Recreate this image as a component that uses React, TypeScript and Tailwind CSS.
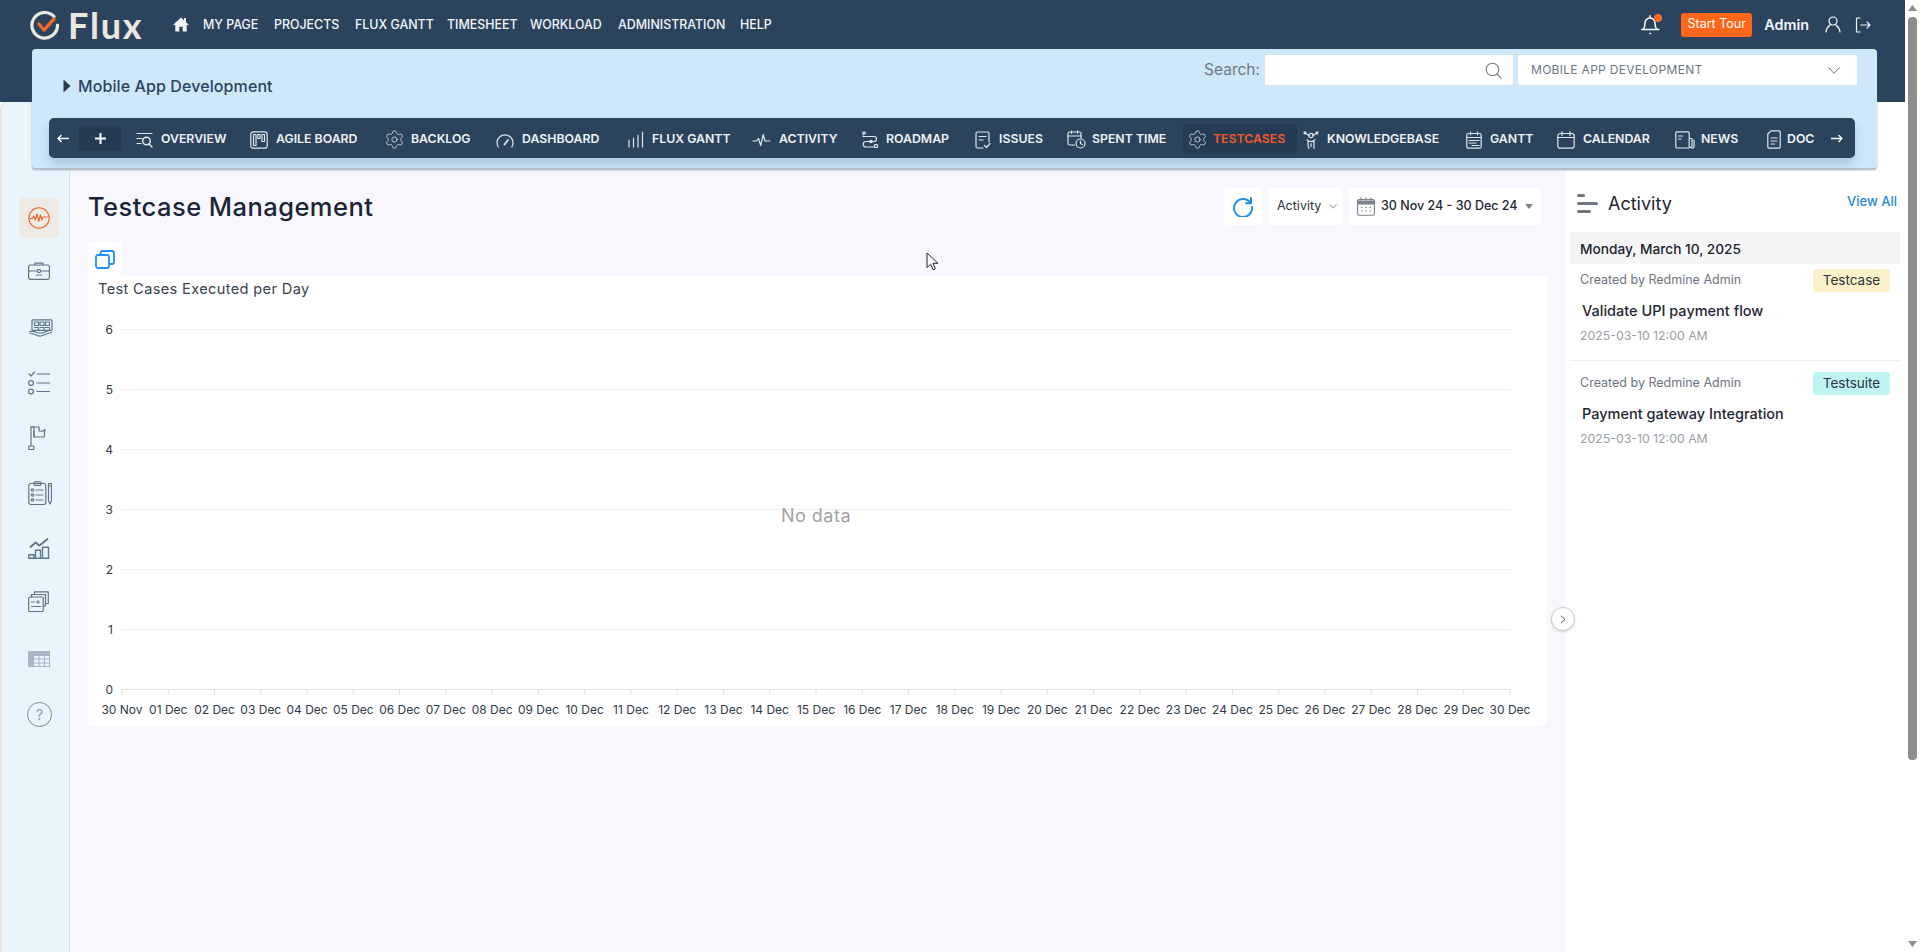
import React from "react";
import { Settings } from "lucide-react";

const S = { fill: "none", stroke: "currentColor", strokeWidth: 1.2, strokeLinecap: "round" as const, strokeLinejoin: "round" as const };

const Ic = {
  overview: (
    <svg width="17" height="17" viewBox="0 0 17 17" {...S}>
      <path d="M1 2.5h15M1 7.5h5M1 12.5h4" />
      <circle cx="10.5" cy="10" r="3.8" strokeWidth="1.5" />
      <path d="M13.2 13l2.8 3" strokeWidth="1.5" />
    </svg>
  ),
  agile: (
    <svg width="18" height="18" viewBox="0 0 18 18" {...S}>
      <rect x="0.8" y="0.8" width="16.4" height="16.4" rx="2.5" />
      <rect x="3.5" y="3.5" width="2.5" height="11" />
      <rect x="7.8" y="3.5" width="2.2" height="4" />
      <rect x="12" y="3.5" width="2.5" height="7" />
    </svg>
  ),
  gear: <Settings size={21} strokeWidth={0.9} className="-mr-[2px] -ml-[1px]" />,
  gearActive: <Settings size={21} strokeWidth={0.9} className="-mr-[3px] -ml-[1px]" />,
  dash: (
    <svg width="18" height="16" viewBox="0 0 18 16" {...S}>
      <path d="M2.2 15A8 8 0 1 1 15.8 15" />
      <path d="M8.5 12.5L12 8" strokeWidth="1.8" />
    </svg>
  ),
  bars: (
    <svg width="16" height="17" viewBox="0 0 16 17" {...S}>
      <path d="M1 16v-7M5.5 16V7M10 16V4M14.5 16V1" />
    </svg>
  ),
  pulse: (
    <svg width="19" height="12" viewBox="0 0 18 12" {...S}>
      <path d="M0.5 7h3.5l2-2.5 2.2 7 2.5-11 1.8 6.5h5" />
    </svg>
  ),
  road: (
    <svg width="17" height="17" viewBox="0 0 17 17" {...S} className="-mr-[1px]">
      <path d="M1 1v3M1 1h2v2H1" />
      <path d="M1 5.5h11a2.5 2.5 0 0 1 0 5H4a2.7 2.7 0 0 0 0 5.5h8" />
      <circle cx="14" cy="15" r="1.7" />
      <circle cx="9" cy="10.5" r="1.2" />
    </svg>
  ),
  issues: (
    <svg width="16" height="18" viewBox="0 0 16 18" {...S}>
      <path d="M8 17H2.5A1.5 1.5 0 0 1 1 15.5v-13A1.5 1.5 0 0 1 2.5 1h10A1.5 1.5 0 0 1 14 2.5V11" />
      <path d="M4 5.5h7M4 9h4M9.5 14.5l2 2 3.5-4" />
    </svg>
  ),
  spent: (
    <svg width="19" height="19" viewBox="0 0 19 19" {...S} className="-mr-[2px]">
      <path d="M7.5 15H2.5A1.5 1.5 0 0 1 1 13.5v-10A1.5 1.5 0 0 1 2.5 2h10A1.5 1.5 0 0 1 14 3.5V8" />
      <path d="M1 6h13M4.5 0.8v2.5M10.5 0.8v2.5" />
      <circle cx="13.5" cy="13.5" r="4.5" />
      <path d="M13.5 11v2.5l1.8 1" />
    </svg>
  ),
  know: (
    <svg width="16" height="18" viewBox="0 0 15 18" {...S}>
      <circle cx="7.5" cy="4.5" r="2.2" />
      <circle cx="1.5" cy="1.8" r="1" />
      <circle cx="13.5" cy="1.8" r="1" />
      <path d="M2.2 2.6l3.4 2M12.8 2.6l-3.4 2M3.5 8.5c1 1.5 2.5 2 4 2s3-.5 4-2M4.5 10v4c0 2 1 3.5 1 3.5M10.5 10v7.5M7.5 12.5v3" />
    </svg>
  ),
  gantt: (
    <svg width="16" height="18" viewBox="0 0 16 18" {...S}>
      <rect x="0.8" y="2.5" width="14.4" height="14.7" rx="1.5" />
      <path d="M4.5 0.8v3M11.5 0.8v3M0.8 6.5h14.4M3 9.5h10M3 12h7M6 14.5h7" />
    </svg>
  ),
  cal: (
    <svg width="18" height="18" viewBox="0 0 18 18" {...S}>
      <rect x="0.8" y="2.5" width="16.4" height="14.7" rx="2.5" />
      <path d="M5 0.6v4M13 0.6v4M0.8 6.5h16.4" />
    </svg>
  ),
  news: (
    <svg width="20" height="18" viewBox="0 0 20 18" {...S} className="-mr-[2px]">
      <path d="M14 17H2A1.2 1.2 0 0 1 0.8 15.8V2A1.2 1.2 0 0 1 2 0.8h11A1.2 1.2 0 0 1 14.2 2v13.5A1.5 1.5 0 0 0 17 15.5V7.5h-2.8" />
      <path d="M3.5 5h4M3.5 8h2.5" />
      <path d="M19 9v6.5a1.5 1.5 0 0 1-2 1.5" />
    </svg>
  ),
  doc: (
    <svg width="14" height="19" viewBox="0 0 14 19" {...S} className="-mr-[2px]">
      <path d="M4 0.8h7.7A1.5 1.5 0 0 1 13.2 2.3v14.4a1.5 1.5 0 0 1-1.5 1.5H2.3a1.5 1.5 0 0 1-1.5-1.5V4z" />
      <path d="M4 8h6M4 11h6M4 14h3.5" />
    </svg>
  ),
};

const S2 = { fill: "none", stroke: "#60748a", strokeWidth: 1.2, strokeLinecap: "round" as const, strokeLinejoin: "round" as const };

function SideIcons() {
  return (
    <div className="flex flex-col pt-[88px] pl-[6px]">
      <div className="h-[55px] flex items-center justify-center">
        <div className="w-10 h-10 rounded-[4px] bg-[#efe9e4] flex items-center justify-center">
          <svg width="22" height="22" viewBox="0 0 22 22" fill="none" stroke="#e8672a" strokeWidth="1.1" strokeLinejoin="round">
            <circle cx="11" cy="11" r="10.2" />
            <path d="M1.5 11.5h3l1.3-2.5 1.5 4 1.7-6 1.8 7.5 1.6-6.5 1.5 5 1.3-3h4.5" />
          </svg>
        </div>
      </div>
      <div className="h-[55px] flex items-center justify-center -translate-y-[2px]">
        <svg width="22" height="18" viewBox="0 0 22 18" {...S2}>
          <rect x="0.6" y="3" width="20.8" height="14.4" rx="1.8" />
          <path d="M7 3V1.2h8V3M0.6 9h8M13.4 9h8" />
          <circle cx="11" cy="9" r="1.6" />
          <path d="M8.5 13h5" />
        </svg>
      </div>
      <div className="h-[55px] flex items-center justify-center translate-x-[2px]">
        <svg width="24" height="18" viewBox="0 0 24 18" {...S2}>
          <rect x="3" y="0.8" width="20" height="10.5" rx="1" />
          <rect x="5.5" y="3" width="4" height="3.5" />
          <rect x="11" y="3" width="4" height="3.5" />
          <rect x="16.5" y="3" width="4" height="3.5" />
          <path d="M5.5 8.5h4v3M11 8.5h4v3M16.5 8.5h4v3M0.8 12.5c4-1.5 6 1.5 9 1.5h3.5l6-2.2M0.8 14c4 0 7 3.2 10.5 3.2L23 13" />
        </svg>
      </div>
      <div className="h-[55px] flex items-center justify-center">
        <svg width="22" height="24" viewBox="0 0 22 24" {...S2}>
          <path d="M1 3l2 2 3.5-4M9 3h13M9 12h13M9 20.5h13" />
          <circle cx="3" cy="12" r="2.4" />
          <circle cx="3" cy="20.5" r="2.4" />
        </svg>
      </div>
      <div className="h-[55px] flex items-center justify-center -translate-x-[2px]">
        <svg width="18" height="24" viewBox="0 0 18 24" {...S2}>
          <path d="M3 20V1h8v4c2 .5 4.5 0 6-1.5-.5 2-1 3.5-.5 5.5.2 1-.2 2-1 2H6V5" />
          <path d="M3 1h3v10" />
          <rect x="0.8" y="20" width="5" height="3.5" />
        </svg>
      </div>
      <div className="h-[55px] flex items-center justify-center translate-x-[1px]">
        <svg width="24" height="24" viewBox="0 0 24 24" {...S2}>
          <rect x="0.8" y="2.5" width="17" height="21" rx="2" />
          <rect x="6" y="0.8" width="7" height="3.5" rx="1" />
          <circle cx="4.5" cy="9" r="1.2" />
          <circle cx="4.5" cy="14" r="1.2" />
          <circle cx="4.5" cy="19" r="1.2" />
          <path d="M8 9h7M8 14h7M8 19h7" />
          <path d="M20.5 2.5h3v17.5l-1.5 3-1.5-3zM20.5 5h3" />
        </svg>
      </div>
      <div className="h-[55px] flex items-center justify-center">
        <svg width="22" height="22" viewBox="0 0 22 22" fill="none" stroke="#60748a" strokeWidth="1.4" strokeLinejoin="round" strokeLinecap="round">
          <path d="M2.5 10l5-4.5 4 3L19.5 2" strokeWidth="1.8" />
          <path d="M0.8 21.2v-3.5h5v3.5zM7.5 21.2v-8h5v8zM14.5 21.2v-11h6v11zM0.8 21.2h20" />
        </svg>
      </div>
      <div className="h-[55px] flex items-center justify-center -translate-y-[1px]">
        <svg width="21" height="21" viewBox="0 0 21 21" {...S2}>
          <rect x="0.7" y="6" width="14.5" height="14.5" rx="1.2" />
          <path d="M3.5 6V3.5h14V15h-2.3M6.5 3.5V0.8h13.8V12.5h-3" />
          <path d="M3.5 11h3M10 9.5v3M8.5 11h3M3.5 15.5h9" />
        </svg>
      </div>
      <div className="h-[55px] flex items-center justify-center translate-y-[1px]">
        <svg width="22" height="16" viewBox="0 0 22 16" fill="none" stroke="#a9b6c6" strokeWidth="1">
          <rect x="0.5" y="0.5" width="21" height="15" />
          <rect x="0.5" y="0.5" width="21" height="4" fill="#a9b6c6" />
          <rect x="0.5" y="0.5" width="5" height="15" fill="#a9b6c6" />
          <path d="M5.5 8h16M5.5 12h16M11 0.5v15M16.5 0.5v15" />
        </svg>
      </div>
      <div className="h-[55px] flex items-center justify-center translate-x-[1px] translate-y-[2px]">
        <div className="w-[25px] h-[25px] rounded-full border border-[#7b8a9b] flex items-center justify-center text-[14px] font-[Inter,sans-serif] text-[#8a97a6]">?</div>
      </div>
    </div>
  );
}

const tabs = [
  { w: "w-[114px]", icon: Ic.overview, label: "OVERVIEW" },
  { w: "w-[135px]", icon: Ic.agile, label: "AGILE BOARD" },
  { w: "w-[111px]", icon: Ic.gear, label: "BACKLOG" },
  { w: "w-[132px]", icon: Ic.dash, label: "DASHBOARD" },
  { w: "w-[124px]", icon: Ic.bars, label: "FLUX GANTT" },
  { w: "w-[110px]", icon: Ic.pulse, label: "ACTIVITY" },
  { w: "w-[113px]", icon: Ic.road, label: "ROADMAP" },
  { w: "w-[92px]", icon: Ic.issues, label: "ISSUES" },
  { w: "w-[121px]", icon: Ic.spent, label: "SPENT TIME" },
  { w: "w-[115px]", icon: Ic.gearActive, label: "TESTCASES", active: true },
  { w: "w-[163px]", icon: Ic.know, label: "KNOWLEDGEBASE" },
  { w: "w-[91px]", icon: Ic.gantt, label: "GANTT" },
  { w: "w-[118px]", icon: Ic.cal, label: "CALENDAR" },
  { w: "w-[92px]", icon: Ic.news, label: "NEWS" },
  { w: "w-[48px]", icon: Ic.doc, label: "DOC" },
];

const topNav = [
  { w: "w-[71px]", label: "MY PAGE" },
  { w: "w-[81px]", label: "PROJECTS" },
  { w: "w-[92px]", label: "FLUX GANTT" },
  { w: "w-[83px]", label: "TIMESHEET" },
  { w: "w-[88px]", label: "WORKLOAD" },
  { w: "w-[122px]", label: "ADMINISTRATION" },
  { w: "w-[40px]", label: "HELP" },
];

const days = ["30 Nov", ...Array.from({ length: 30 }, (_, i) => `${String(i + 1).padStart(2, "0")} Dec`)];

function Chart() {
  const left = 34;
  const right = 1422;
  const step = (right - left) / 30;
  return (
    <svg width="1459" height="426" viewBox="0 0 1459 426" className="block font-[Inter,sans-serif]">
      {[6, 5, 4, 3, 2, 1].map((v, i) => (
        <line key={v} x1={left} x2={right} y1={29.5 + i * 60} y2={29.5 + i * 60} stroke="#eef0f2" strokeWidth="1" />
      ))}
      <line x1={left} x2={right} y1={389.5} y2={389.5} stroke="#e0e3e6" strokeWidth="1" />
      {days.map((d, i) => (
        <g key={i}>
          <line x1={left + i * step} x2={left + i * step} y1={389} y2={395} stroke="#e0e3e6" />
          <text x={left + i * step} y={414} textAnchor="middle" fontSize="12" fill="#2f3a4a">{d}</text>
        </g>
      ))}
      {[6, 5, 4, 3, 2, 1, 0].map((v, i) => (
        <text key={v} x="25" y={33.5 + i * 60} textAnchor="end" fontSize="12" fill="#2f3a4a">{v}</text>
      ))}
      <text x="728" y="222" textAnchor="middle" fontSize="18" letterSpacing="0.5" fill="#a3a3a3">No data</text>
    </svg>
  );
}

function ActivityItem({ badge, badgeClass, title, className }: { badge: string; badgeClass: string; title: string; className: string }) {
  return (
    <div className={`ml-[5px] mr-[5px] pl-[10px] ${className}`}>
      <div className="flex items-center justify-between pr-[10px]">
        <span className="text-[12.5px] text-[#6c7480]">Created by Redmine Admin</span>
        <span className={`w-[77px] h-[23px] rounded-[3px] flex items-center justify-center text-[13.5px] text-[#2b3440] ${badgeClass}`}>{badge}</span>
      </div>
      <div className="mt-[9px] ml-[2px] h-5 leading-5 text-[14.5px] font-medium text-[#1f2733] whitespace-nowrap">{title}</div>
      <div className="mt-[7px] h-4 leading-4 text-[12.3px] text-[#98a0a8]">2025-03-10 12:00 AM</div>
    </div>
  );
}

export default function App() {
  return (
    <div className="flex h-[952px] w-full overflow-hidden bg-white font-[Inter,sans-serif]">
      <div className="flex-1 flex flex-col min-w-0">
        {/* Header */}
        <header className="h-[102px] bg-[#2c435e] relative z-10 shrink-0">
          <div className="h-[49px] flex items-center text-white">
            <div className="ml-[30px] w-[143px] flex items-center">
              <svg width="30" height="30" viewBox="0 0 30 30" fill="none">
                <path d="M24 6.5A12.8 12.8 0 1 0 27.5 15" stroke="#ece9e2" strokeWidth="3.2" strokeLinecap="round" />
                <path d="M9 14l5 6 10-11" stroke="#ee6a2b" strokeWidth="3.4" strokeLinecap="round" strokeLinejoin="round" />
              </svg>
              <span className="ml-[8px] text-[36px] leading-none font-bold text-[#ebe7df] tracking-[1.8px] font-[Lato,sans-serif]">Flux</span>
            </div>
            <svg width="16" height="15" viewBox="0 0 16 15" fill="#f2f4f6" className="mr-[14px]">
              <path d="M8 0.5L0 8h2.3v6.5H6.3V9.8h3.4v4.7h4V8H16L13 5.2V1h-2v2.3z" />
            </svg>
            {topNav.map((n) => (
              <span key={n.label} className={`${n.w} shrink-0 pt-[1px] text-[12.4px] font-medium whitespace-nowrap text-[#f3f5f7]`}>{n.label}</span>
            ))}
            <div className="ml-auto flex items-center">
              <div className="relative w-[21px] h-[21px] mr-[19px]">
                <svg width="19" height="21" viewBox="0 0 19 21" fill="none" stroke="#ffffff" strokeWidth="1.5" strokeLinecap="round" strokeLinejoin="round">
                  <path d="M2 15.5c1.5-1.5 2-3 2-6.5a5 5 0 0 1 5-5 5 5 0 0 1 5 5c0 3.5.5 5 2 6.5zM0.8 15.5h17M9 1.8v2M9 19.5h.5" />
                </svg>
                <span className="absolute right-0 top-0 w-[8px] h-[8px] rounded-full bg-[#ff6a1f]" />
              </div>
              <span className="w-[71px] h-6 rounded-[3px] bg-[#ff661a] text-[12.5px] text-white flex items-center justify-center">Start Tour</span>
              <span className="ml-[12px] text-[14.4px] font-semibold text-[#f3f5f7]">Admin</span>
              <svg width="16" height="17" viewBox="0 0 16 17" fill="none" stroke="#f3f5f7" strokeWidth="1.2" strokeLinecap="round" className="ml-[16px]">
                <circle cx="8" cy="5" r="4" />
                <path d="M1 16c0-4 3-6 4.5-7.5M15 16c0-4-3-6-4.5-7.5" />
              </svg>
              <svg width="16" height="16" viewBox="0 0 16 16" fill="none" stroke="#f3f5f7" strokeWidth="1.2" strokeLinecap="round" strokeLinejoin="round" className="ml-[14px] mr-[34px]">
                <path d="M5 1H1.5v14H5M6 8h9M12 4.8L15 8l-3 3.2" />
              </svg>
            </div>
          </div>
          {/* Project card */}
          <div className="ml-[32px] w-[1845px] h-[121px] rounded-[4px] bg-[#cfe7fb] border-b-2 border-[#b9c2cb] shadow-[0_0_2px_rgba(80,100,120,0.5)] pl-[17px] pr-[20px] flex flex-col">
            <div className="h-[69px] flex justify-between">
              <div className="ml-[14px] mt-[27px] h-5 flex items-center text-[#2c435e]">
                <svg width="8" height="14" viewBox="0 0 8 14" fill="#2c3a4c"><path d="M0.5 0.5L7.5 7L0.5 13.5z" /></svg>
                <span className="ml-[7px] text-[16px] font-medium tracking-[0.1px] whitespace-nowrap">Mobile App Development</span>
              </div>
              <div className="mt-[6px] h-[30px] flex items-center">
                <span className="text-[15.5px] text-[#6d7885] mr-[5px]">Search:</span>
                <div className="w-[248px] h-[30px] rounded-[2px] bg-white flex items-center justify-end pr-[11px]">
                  <svg width="17" height="17" viewBox="0 0 17 17" fill="none" stroke="#727d89" strokeWidth="1.1" strokeLinecap="round">
                    <circle cx="7.5" cy="7.5" r="6.3" />
                    <path d="M12 12l4 4.2" />
                  </svg>
                </div>
                <div className="ml-[5px] w-[339px] h-[30px] rounded-[2px] bg-white flex items-center justify-between pl-[13px] pr-[17px]">
                  <span className="text-[12px] text-[#6c7682] tracking-[0.3px]">MOBILE APP DEVELOPMENT</span>
                  <svg width="12" height="7" viewBox="0 0 12 7" fill="none" stroke="#6c7682" strokeWidth="1"><path d="M0.5 0.5L6 6.3l5.5-5.8" /></svg>
                </div>
              </div>
            </div>
            <div className="h-10 mr-[2px] rounded-[5px] bg-[#2c435e] shadow-[0_6px_10px_rgba(60,100,140,0.25)] flex items-center text-[#eef2f5]">
              <svg width="12" height="9" viewBox="0 0 12 9" fill="none" stroke="#ffffff" strokeWidth="1.3" className="ml-[8px] shrink-0"><path d="M12 4.5H1M4.5 1L1 4.5 4.5 8" /></svg>
              <div className="ml-[10px] w-[42px] h-[25px] rounded-[3px] bg-[#263b53] shrink-0 flex items-center justify-center">
                <svg width="11" height="11" viewBox="0 0 11 11" stroke="#ffffff" strokeWidth="2"><path d="M5.5 0v11M0 5.5h11" /></svg>
              </div>
              <div className="ml-[15px] w-[1679px] shrink-0 overflow-hidden flex items-center pt-[7px] pb-[4px]">
                {tabs.map((t) => (
                  <div key={t.label} className={`${t.w} shrink-0 relative flex items-center gap-[8px] whitespace-nowrap text-[12.3px] font-semibold`}>
                    {t.active && <span className="absolute -left-[5px] right-[6px] -top-[5px] -bottom-[3px] rounded-[3px] bg-[#263b53]" />}
                    <span className="relative text-[#dfe6ec]">{t.icon}</span>
                    <span className={t.active ? "relative text-[#f0582a]" : "relative"}>{t.label}</span>
                  </div>
                ))}
              </div>
              <svg width="12" height="9" viewBox="0 0 12 9" fill="none" stroke="#ffffff" strokeWidth="1.3" className="ml-[16px] shrink-0"><path d="M0 4.5h11M7.5 1L11 4.5 7.5 8" /></svg>
            </div>
          </div>
        </header>

        {/* Body */}
        <div className="flex-1 flex min-h-0">
          <aside className="w-[70px] shrink-0 bg-[#e9f5fd] border-r border-[#cfe2f1] border-l-2 border-l-[#e6e3e1] rounded-tl-[6px]">
            <SideIcons />
          </aside>
          <main className="relative flex-1 min-w-0 bg-[#f7f7fd] pt-[86px] pl-[18px] pr-[18px]">
            <div className="h-[37px] flex items-center justify-between">
              <h1 className="pt-[2px] text-[25.5px] font-medium tracking-[0.45px] text-[#1c2536] font-[Inter,sans-serif]">Testcase Management</h1>
              <div className="flex items-center h-[37px] mr-[6px]">
                <div className="w-[38px] h-[37px] rounded-[4px] bg-white flex items-center justify-center">
                  <svg width="20" height="20" viewBox="0 0 20 20" fill="none" stroke="#1e90e8" strokeWidth="2" strokeLinecap="round" strokeLinejoin="round">
                    <path d="M17.5 6A9 9 0 1 0 19 10" />
                    <path d="M18 1v5.2h-5" />
                  </svg>
                </div>
                <div className="ml-[7px] w-[73px] h-[37px] rounded-[4px] bg-white flex items-center pl-[8px] text-[12.5px] text-[#2a3340]">
                  Activity
                  <svg width="8" height="5" viewBox="0 0 8 5" fill="none" stroke="#a6adb5" strokeWidth="1.2" className="ml-[8px]"><path d="M0.5 0.5L4 4l3.5-3.5" /></svg>
                </div>
                <div className="ml-[7px] w-[192px] h-[37px] rounded-[4px] bg-white flex items-center pl-[8px] text-[12.5px] font-medium text-[#1f2733]">
                  <svg width="18" height="19" viewBox="0 0 18 19" fill="none" stroke="#7b838d" strokeWidth="1.1">
                    <rect x="0.6" y="2.5" width="16.8" height="15.8" rx="1.5" />
                    <path d="M0.6 4h16.8v3H0.6z" fill="#7b838d" />
                    <path d="M4 0.6v3M9 0.6v3M14 0.6v3M4 10.5h1.5M8.2 10.5h1.5M12.5 10.5H14M4 14h1.5M8.2 14h1.5M12.5 14H14" />
                  </svg>
                  <span className="ml-[6px] whitespace-nowrap">30 Nov 24 - 30 Dec 24</span>
                  <svg width="8" height="5" viewBox="0 0 8 5" fill="#7b838d" className="ml-[7px]"><path d="M0 0h8L4 5z" /></svg>
                </div>
              </div>
            </div>
            <div className="mt-[17px] w-[33px] h-[34px] bg-white flex items-center justify-center">
              <svg width="20" height="19" viewBox="0 0 20 19" fill="none" stroke="#1e90ff" strokeWidth="1.8" strokeLinejoin="round">
                <rect x="1" y="5" width="13" height="13" rx="2" />
                <path d="M5.5 5V3a2 2 0 0 1 2-2H17a2 2 0 0 1 2 2v9a2 2 0 0 1-2 2h-3" />
              </svg>
            </div>
            <section className="w-[1459px] h-[450px] bg-white rounded-r-[4px]">
              <div className="h-6 pt-[1px] pl-[10px] leading-6 text-[14.6px] text-[#39424e] tracking-[0.35px] whitespace-nowrap">Test Cases Executed per Day</div>
              <Chart />
            </section>

            <div className="absolute -right-[10px] top-[505px] z-20 w-6 h-6 rounded-full bg-white border border-[#c9ccd0] shadow-sm flex items-center justify-center">
              <svg width="6" height="9" viewBox="0 0 6 9" fill="none" stroke="#555d66" strokeWidth="1"><path d="M1 0.8L5 4.5 1 8.2" /></svg>
            </div>
            <svg width="13" height="19" viewBox="0 0 13 19" className="absolute left-[856px] top-[150px] z-30">
              <path d="M1 1v14.5l3.6-3.3 2.4 5.6 2.4-1-2.4-5.5H12z" fill="#fff" stroke="#222" strokeWidth="1" strokeLinejoin="round" />
            </svg>
          </main>

          {/* Right panel */}
          <aside className="w-[340px] shrink-0 bg-white pt-[86px]">
            <div className="h-[30px] flex items-center justify-between pl-[12px] pr-[8px]">
              <div className="flex items-center">
                <div className="w-[21px] flex flex-col gap-[5px]">
                  <span className="block h-[3px] w-[8px] bg-[#6f7680] rounded-sm" />
                  <span className="block h-[3px] w-[21px] bg-[#6f7680] rounded-sm" />
                  <span className="block h-[3px] w-[14px] bg-[#6f7680] rounded-sm" />
                </div>
                <span className="ml-[10px] text-[18px] text-[#20262e]">Activity</span>
              </div>
              <span className="text-[13px] -mt-[3px] font-medium text-[#1f8ad8]">View All</span>
            </div>
            <div className="mt-[14px] mx-[5px] h-[32px] bg-[#f5f5f5] pl-[10px] pt-[2px] flex items-center text-[13.7px] font-medium text-[#1c2330]">Monday, March 10, 2025</div>
            <ActivityItem className="pt-[5px] pb-[16px] border-b border-[#eceef0]" badge="Testcase" badgeClass="bg-[#fdf1c9]" title="Validate UPI payment flow" />
            <ActivityItem className="pt-[11px]" badge="Testsuite" badgeClass="bg-[#bef5f2]" title="Payment gateway Integration" />
          </aside>
        </div>
      </div>

      {/* Window scrollbar */}
      <div className="w-[15px] shrink-0 bg-white flex flex-col items-center">
        <svg width="9" height="6" viewBox="0 0 9 6" fill="#8d8d8d" className="mt-[5px]"><path d="M4.5 0L9 6H0z" /></svg>
        <div className="mt-[6px] w-[9px] h-[743px] rounded-[4px] bg-[#8d8d8d]" />
        <svg width="9" height="6" viewBox="0 0 9 6" fill="#8d8d8d" className="mt-auto mb-[5px]"><path d="M4.5 6L0 0h9z" /></svg>
      </div>
    </div>
  );
}
